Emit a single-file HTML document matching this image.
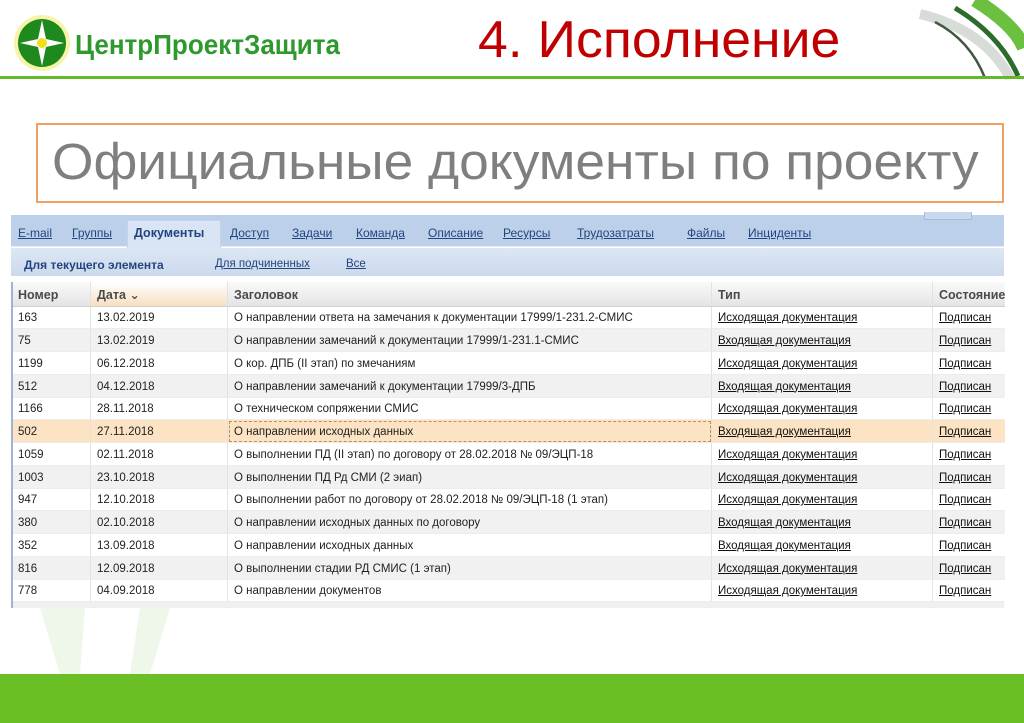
<!DOCTYPE html>
<html><head><meta charset="utf-8"><style>
*{margin:0;padding:0;box-sizing:border-box}
body{width:1024px;height:723px;background:#fff;position:relative;overflow:hidden;font-family:"Liberation Sans","DejaVu Sans",sans-serif}
.abs{position:absolute}
.tab{position:absolute;top:226px;font-size:12px;color:#23457f;text-decoration:underline}
.sub{position:absolute;top:258px;font-size:11.5px;color:#23457f;text-decoration:underline}
table{position:absolute;left:11px;top:282px;width:993px;border-collapse:collapse;font-size:11.5px;color:#222;table-layout:fixed}
td,th{height:22.75px;padding:2px 0 0 6px;white-space:nowrap;overflow:hidden;text-align:left;border-left:1px solid #e2e2e2;border-bottom:1px solid #ececec}
th{height:24px;background:linear-gradient(#fafafa,#e4e4e4);color:#4a4a4a;font-size:12.5px;border-bottom:1px solid #d0d0d0}
th.d{background:linear-gradient(#fff,#f6dfc2)}
tr:nth-child(odd) td{background:#f1f1f1}
tr.h td{background:#fbe3c4}
td u{color:#111}
</style></head><body>
<svg class="abs" style="left:0;top:0" width="1024" height="90">
<path d="M920 14 Q985 30 1010 78" stroke="#d8dcd8" stroke-width="10" fill="none"/>
<path d="M955 8 Q1000 35 1018 76" stroke="#2d6b2d" stroke-width="5" fill="none"/>
<path d="M975 0 Q1015 25 1024 48" stroke="#6cc040" stroke-width="14" fill="none"/>
<path d="M935 22 Q970 40 985 78" stroke="#405840" stroke-width="2.5" fill="none"/>
<circle cx="42" cy="43" r="28" fill="#f7f4a8"/>
<circle cx="42" cy="43" r="24" fill="#1e8a1e"/>
<path d="M42 20 L46 39 L64 43 L46 47 L42 66 L38 47 L20 43 L38 39Z" fill="#fff"/>
<circle cx="42" cy="43" r="5" fill="#f0e020"/>
<rect x="0" y="76" width="1024" height="3" fill="#62b92b"/>
</svg>
<div class="abs" style="left:75px;top:29px;font-size:28px;font-weight:bold;color:#2e9a2e;transform:scaleX(0.93);transform-origin:left">ЦентрПроектЗащита</div>
<div class="abs" style="left:478px;top:10px;font-size:52px;color:#c00000;transform:scaleX(1.03);transform-origin:left">4. Исполнение</div>
<div class="abs" style="left:36px;top:123px;width:968px;height:80px;border:2px solid #f0a060"></div>
<div class="abs" style="left:52px;top:132px;font-size:51px;color:#7f7f7f;transform:scaleX(1.045);transform-origin:left">Официальные документы по проекту</div>
<div class="abs" style="left:11px;top:215px;width:993px;height:32px;background:#bcd0ea;border-bottom:1px solid #e6eef8"></div>
<div class="abs" style="left:924px;top:212px;width:48px;height:8px;border:1px solid #a9bcd6;border-top:none;background:#c8d8ee"></div>
<div class="abs" style="left:127px;top:220px;width:94px;height:28px;background:#d9e5f4;border:1px solid #c3d3e8;border-bottom:none"></div>
<div class="abs" style="left:11px;top:248px;width:993px;height:28px;background:linear-gradient(#dde7f4,#cbd9ec)"></div>
<span class="tab" style="left:18px">E-mail</span>
<span class="tab" style="left:72px">Группы</span>
<span class="tab" style="left:134px;font-weight:bold;text-decoration:none;font-size:12.5px">Документы</span>
<span class="tab" style="left:230px">Доступ</span>
<span class="tab" style="left:292px">Задачи</span>
<span class="tab" style="left:356px">Команда</span>
<span class="tab" style="left:428px">Описание</span>
<span class="tab" style="left:503px">Ресурсы</span>
<span class="tab" style="left:577px">Трудозатраты</span>
<span class="tab" style="left:687px">Файлы</span>
<span class="tab" style="left:748px">Инциденты</span>
<span class="sub" style="left:24px;font-weight:bold;text-decoration:none;font-size:12px">Для текущего элемента</span>
<span class="sub" style="left:215px">Для подчиненных</span>
<span class="sub" style="left:346px">Все</span>
<table>
<colgroup><col style="width:79px"><col style="width:137px"><col style="width:484px"><col style="width:221px"><col style="width:72px"></colgroup>
<tr><th>Номер</th><th class="d">Дата ⌄</th><th>Заголовок</th><th>Тип</th><th>Состояние</th></tr>
<tr><td>163</td><td>13.02.2019</td><td>О направлении ответа на замечания к документации 17999/1-231.2-СМИС</td><td><u>Исходящая документация</u></td><td><u>Подписан</u></td></tr>
<tr><td>75</td><td>13.02.2019</td><td>О направлении замечаний к документации 17999/1-231.1-СМИС</td><td><u>Входящая документация</u></td><td><u>Подписан</u></td></tr>
<tr><td>1199</td><td>06.12.2018</td><td>О кор. ДПБ (II этап) по змечаниям</td><td><u>Исходящая документация</u></td><td><u>Подписан</u></td></tr>
<tr><td>512</td><td>04.12.2018</td><td>О направлении замечаний к документации 17999/3-ДПБ</td><td><u>Входящая документация</u></td><td><u>Подписан</u></td></tr>
<tr><td>1166</td><td>28.11.2018</td><td>О техническом сопряжении СМИС</td><td><u>Исходящая документация</u></td><td><u>Подписан</u></td></tr>
<tr class="h"><td>502</td><td>27.11.2018</td><td style="outline:1px dashed #c09050;outline-offset:-2px">О направлении исходных данных</td><td><u>Входящая документация</u></td><td><u>Подписан</u></td></tr>
<tr><td>1059</td><td>02.11.2018</td><td>О выполнении ПД (II этап) по договору от 28.02.2018 № 09/ЭЦП-18</td><td><u>Исходящая документация</u></td><td><u>Подписан</u></td></tr>
<tr><td>1003</td><td>23.10.2018</td><td>О выполнении ПД Рд СМИ (2 эиап)</td><td><u>Исходящая документация</u></td><td><u>Подписан</u></td></tr>
<tr><td>947</td><td>12.10.2018</td><td>О выполнении работ по договору от 28.02.2018 № 09/ЭЦП-18 (1 этап)</td><td><u>Исходящая документация</u></td><td><u>Подписан</u></td></tr>
<tr><td>380</td><td>02.10.2018</td><td>О направлении исходных данных по договору</td><td><u>Входящая документация</u></td><td><u>Подписан</u></td></tr>
<tr><td>352</td><td>13.09.2018</td><td>О направлении исходных данных</td><td><u>Входящая документация</u></td><td><u>Подписан</u></td></tr>
<tr><td>816</td><td>12.09.2018</td><td>О выполнении стадии РД СМИС (1 этап)</td><td><u>Исходящая документация</u></td><td><u>Подписан</u></td></tr>
<tr><td>778</td><td>04.09.2018</td><td>О направлении документов</td><td><u>Исходящая документация</u></td><td><u>Подписан</u></td></tr>
</table>
<div class="abs" style="left:11px;top:602px;width:993px;height:6px;background:#f0f0f0"></div>
<div class="abs" style="left:11px;top:282px;width:2px;height:326px;background:#9fb4d4;z-index:5"></div>
<svg class="abs" style="left:0;top:608px" width="400" height="66">
<path d="M40 0 L60 66 L80 66 L85 0Z" fill="#eef7ea"/>
<path d="M140 0 L130 66 L150 66 L170 0Z" fill="#eef7ea"/>
</svg>
<div class="abs" style="left:0;top:674px;width:1024px;height:49px;background:#6abf25"></div>
</body></html>
